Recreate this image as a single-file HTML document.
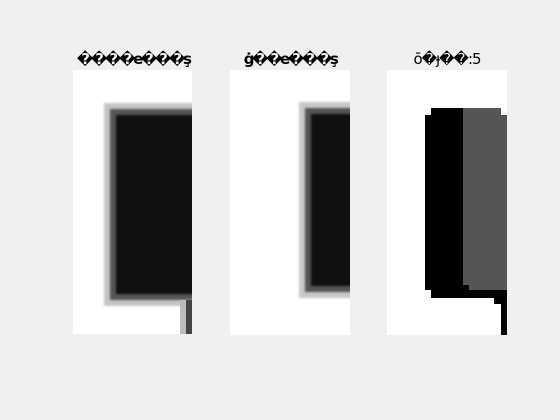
<!DOCTYPE html>
<html><head><style>
body{margin:0;width:560px;height:420px;background:#f0f0f0;position:relative;overflow:hidden;font-family:"DejaVu Sans","Liberation Sans",sans-serif;}
.p{position:absolute;background:#fff;top:70px;overflow:hidden}
.r{position:absolute}
.t{position:absolute;top:50px;font-size:15px;font-weight:bold;color:#000;text-align:center;width:160px;white-space:nowrap;letter-spacing:-2.6px;unicode-bidi:bidi-override;direction:ltr}
</style></head><body>
<div class="t" style="left:53px">����e���ş</div>
<div class="t" style="left:210px">ġ��e���ş</div>
<div class="t" style="left:367px;font-weight:normal;letter-spacing:-1px">ō�ɟ��:5</div>

<div class="p" style="left:73px;width:119px;height:264px">
 <div class="r" style="left:31px;top:33px;width:100px;height:203px;background:#c4c4c4;filter:blur(1px)"></div>
 <div class="r" style="left:37px;top:39px;width:100px;height:191px;background:#555;filter:blur(1px)"></div>
 <div class="r" style="left:43px;top:45px;width:100px;height:179px;background:#101010;filter:blur(1px)"></div>
 <div class="r" style="left:107px;top:230px;width:12px;height:34px;background:#bbb"></div>
 <div class="r" style="left:113px;top:230px;width:6px;height:34px;background:#444"></div>
</div>

<div class="p" style="left:230px;width:120px;height:265px">
 <div class="r" style="left:69px;top:32px;width:100px;height:196px;background:#c8c8c8;filter:blur(1px)"></div>
 <div class="r" style="left:75px;top:38px;width:100px;height:184px;background:#555;filter:blur(1px)"></div>
 <div class="r" style="left:81px;top:44px;width:100px;height:172px;background:#101010;filter:blur(1px)"></div>
</div>

<div class="p" style="left:387px;width:120px;height:265px">
 <div class="r" style="left:38px;top:45px;width:40px;height:175px;background:#000"></div>
 <div class="r" style="left:44px;top:38px;width:63px;height:190px;background:#000"></div>
 <div class="r" style="left:76px;top:38px;width:38px;height:177px;background:#555"></div>
 <div class="r" style="left:82px;top:38px;width:32px;height:182px;background:#555"></div>
 <div class="r" style="left:114px;top:45px;width:6px;height:175px;background:#555"></div>
 <div class="r" style="left:107px;top:220px;width:13px;height:14px;background:#000"></div>
 <div class="r" style="left:114px;top:220px;width:6px;height:45px;background:#000"></div>
</div>
</body></html>
